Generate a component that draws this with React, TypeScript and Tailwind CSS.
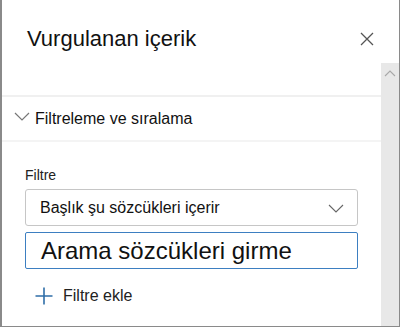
import React from "react";

export default function App() {
  return (
    <div
      className="w-[400px] h-[328px] bg-white relative overflow-hidden"
      style={{ fontFamily: '"Liberation Sans", Arial, sans-serif' }}
    >
      <div className="h-[327px] border-l-2 border-r border-b border-[#8a8a8a] flex flex-col">
        {/* Header */}
        <div className="flex items-start h-[63px] pl-[25px] pr-[24px] pt-[26px]">
          <div className="flex-1 text-[22px] leading-[26px] text-[#111]">Vurgulanan içerik</div>
          <svg width="16" height="16" viewBox="0 0 16 16" className="mt-[5px]">
            <path d="M2 2 L14 14 M14 2 L2 14" stroke="#555" strokeWidth="1.3" fill="none" />
          </svg>
        </div>
        <div className="flex flex-1">
          <div className="flex-1 flex flex-col">
            <div className="h-[32px]" />
            <div className="h-[2px] bg-[#f0f0f0]" />
            <div className="h-[43px] flex items-center pl-[11px]">
              <svg width="18" height="12" viewBox="0 0 18 12" className="mr-[4px] mt-[-6px]">
                <path d="M2 3 L9 10 L16 3" stroke="#777" strokeWidth="1.2" fill="none" />
              </svg>
              <span className="text-[16px] text-[#111]">Filtreleme ve sıralama</span>
            </div>
            <div className="h-[2px] bg-[#f4f4f4]" />
            <div className="pl-[23px] pr-[23px]">
              <div className="mt-[25px] text-[14px] leading-[16px] text-[#222]">Filtre</div>
              <div className="mt-[6px] h-[37px] border border-[#c6c6c6] rounded-[3px] flex items-center pl-[14px] pr-[13px]">
                <span className="flex-1 text-[16px] text-[#111]">Başlık şu sözcükleri içerir</span>
                <svg width="16" height="10" viewBox="0 0 16 10">
                  <path d="M1 2 L8 9 L15 2" stroke="#666" strokeWidth="1.1" fill="none" />
                </svg>
              </div>
              <div className="mt-[6px] h-[37px] border border-[#3d7fc1] rounded-[2px] flex items-center pl-[15px]">
                <span className="text-[24px] text-[#111]">Arama sözcükleri girme</span>
              </div>
              <div className="mt-[15px] flex items-center pl-[10px]">
                <svg width="18" height="18" viewBox="0 0 18 18">
                  <path d="M9 0.5 V17.5 M0.5 9 H17.5" stroke="#2f6ea8" strokeWidth="1.6" fill="none" />
                </svg>
                <span className="ml-[10px] text-[16px] text-[#222]">Filtre ekle</span>
              </div>
            </div>
          </div>
          <div className="w-[18px] bg-[#e8e8e8] flex justify-center pt-[6px]">
            <svg width="12" height="8" viewBox="0 0 12 8">
              <path d="M1 7 L6 2 L11 7" stroke="#a8a8a8" strokeWidth="1.1" fill="none" />
            </svg>
          </div>
        </div>
      </div>
    </div>
  );
}
